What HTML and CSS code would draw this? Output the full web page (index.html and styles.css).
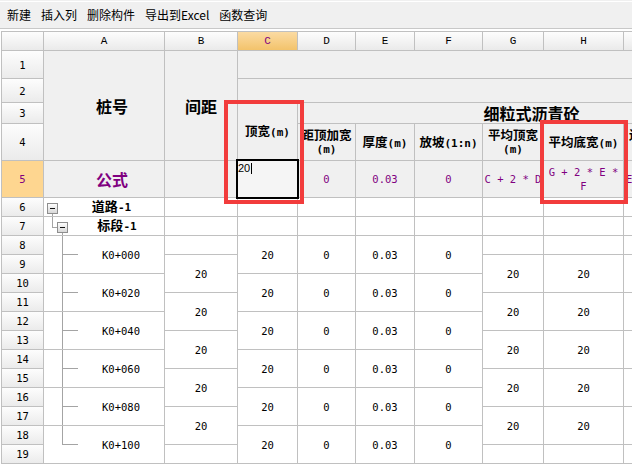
FILE: index.html
```html
<!DOCTYPE html>
<html lang="zh-CN">
<head>
<meta charset="utf-8">
<title>细粒式沥青砼</title>
<link rel="stylesheet" href="styles.css">
</head>
<body>
<div class="toolbar">
  <span>新建</span><span>插入列</span><span>删除构件</span><span>导出到Excel</span><span>函数查询</span>
</div>
<div class="sheet">
  <div class="grid">
    <!-- column header -->
    <div class="c ch"></div>
    <div class="c ch">A</div>
    <div class="c ch">B</div>
    <div class="c ch sel">C</div>
    <div class="c ch">D</div>
    <div class="c ch">E</div>
    <div class="c ch">F</div>
    <div class="c ch">G</div>
    <div class="c ch">H</div>
    <div class="c ch">I</div>
    <div class="c ch">J</div>

    <!-- row 1 -->
    <div class="c rh">1</div>
    <div class="c hd big pl rs4">桩号</div>
    <div class="c hd big rs4">间距</div>
    <div class="c hd cs8"></div>
    <!-- row 2 -->
    <div class="c rh">2</div>
    <div class="c hd cs8"></div>
    <!-- row 3 -->
    <div class="c rh">3</div>
    <div class="c hd th rs2"><span>顶宽<span class="u">(m)</span></span></div>
    <div class="c hd big cs7">细粒式沥青砼</div>
    <!-- row 4 -->
    <div class="c rh">4</div>
    <div class="c hd th"><span>距顶加宽<br><span class="u">(m)</span></span></div>
    <div class="c hd th"><span>厚度<span class="u">(m)</span></span></div>
    <div class="c hd th"><span>放坡<span class="u">(1:n)</span></span></div>
    <div class="c hd th"><span>平均顶宽<br><span class="u">(m)</span></span></div>
    <div class="c hd th"><span>平均底宽<span class="u">(m)</span></span></div>
    <div class="c hd th"><span>边坡宽度<br><span class="u">(m)</span></span></div>
    <div class="c hd"></div>
    <!-- row 5 -->
    <div class="c rh sel">5</div>
    <div class="c hd fxname pl">公式</div>
    <div class="c hd"></div>
    <div class="c editor"><span>20<i class="caret"></i></span></div>
    <div class="c hd fx">0</div>
    <div class="c hd fx">0.03</div>
    <div class="c hd fx">0</div>
    <div class="c hd fx">C + 2 * D</div>
    <div class="c hd fx">G + 2 * E * F</div>
    <div class="c hd fx left">E + F</div>
    <div class="c hd"></div>
    <!-- row 6 -->
    <div class="c rh">6</div>
    <div class="c tree">
      <svg class="tg" width="15" height="18" viewBox="0 0 15 18">
        <defs><linearGradient id="bx" x1="0" y1="0" x2="0" y2="1"><stop offset="0" stop-color="#ffffff"/><stop offset="1" stop-color="#d6d6d6"/></linearGradient></defs>
        <path d="M8.5 16V18" class="ln"/>
        <rect x="3.5" y="5.5" width="10" height="10" fill="url(#bx)" stroke="#8e8e8e"/>
        <rect x="6" y="10" width="5" height="1.4" fill="#111"/>
      </svg>
      <span class="tt">道路<span class="u">-1</span></span>
    </div>
    <div class="c"></div><div class="c"></div><div class="c"></div><div class="c"></div><div class="c"></div>
    <div class="c"></div><div class="c"></div><div class="c"></div><div class="c"></div>
    <!-- row 7 -->
    <div class="c rh">7</div>
    <div class="c tree">
      <svg class="tg" width="26" height="18" viewBox="0 0 26 18">
        <path d="M8.5 0V10.5H13M18.5 16V18" class="ln"/>
        <rect x="13.5" y="5.5" width="10" height="10" fill="url(#bx)" stroke="#8e8e8e"/>
        <rect x="16" y="10" width="5" height="1.4" fill="#111"/>
      </svg>
      <span class="tt">标段<span class="u">-1</span></span>
    </div>
    <div class="c"></div><div class="c"></div><div class="c"></div><div class="c"></div><div class="c"></div>
    <div class="c"></div><div class="c"></div><div class="c"></div><div class="c"></div>
    <!-- row 8 -->
    <div class="c rh">8</div>
    <div class="c tree rs2"><svg class="tg" width="34" height="37" viewBox="0 0 34 37"><path d="M18.5 0V37M18 18.5H34" class="ln"/></svg><span class="kt">K0+000</span></div>
    <div class="c"></div>
    <div class="c rs2">20</div>
    <div class="c rs2">0</div>
    <div class="c rs2">0.03</div>
    <div class="c rs2">0</div>
    <div class="c"></div><div class="c"></div><div class="c"></div><div class="c"></div>
    <!-- row 9 -->
    <div class="c rh">9</div>
    <div class="c rs2">20</div>
    <div class="c rs2">20</div>
    <div class="c rs2">20</div>
    <div class="c rs2"></div>
    <div class="c rs2"></div>
    <!-- row 10 -->
    <div class="c rh">10</div>
    <div class="c tree rs2"><svg class="tg" width="34" height="37" viewBox="0 0 34 37"><path d="M18.5 0V37M18 18.5H34" class="ln"/></svg><span class="kt">K0+020</span></div>
    <div class="c rs2">20</div>
    <div class="c rs2">0</div>
    <div class="c rs2">0.03</div>
    <div class="c rs2">0</div>
    <!-- row 11 -->
    <div class="c rh">11</div>
    <div class="c rs2">20</div>
    <div class="c rs2">20</div>
    <div class="c rs2">20</div>
    <div class="c rs2"></div>
    <div class="c rs2"></div>
    <!-- row 12 -->
    <div class="c rh">12</div>
    <div class="c tree rs2"><svg class="tg" width="34" height="37" viewBox="0 0 34 37"><path d="M18.5 0V37M18 18.5H34" class="ln"/></svg><span class="kt">K0+040</span></div>
    <div class="c rs2">20</div>
    <div class="c rs2">0</div>
    <div class="c rs2">0.03</div>
    <div class="c rs2">0</div>
    <!-- row 13 -->
    <div class="c rh">13</div>
    <div class="c rs2">20</div>
    <div class="c rs2">20</div>
    <div class="c rs2">20</div>
    <div class="c rs2"></div>
    <div class="c rs2"></div>
    <!-- row 14 -->
    <div class="c rh">14</div>
    <div class="c tree rs2"><svg class="tg" width="34" height="37" viewBox="0 0 34 37"><path d="M18.5 0V37M18 18.5H34" class="ln"/></svg><span class="kt">K0+060</span></div>
    <div class="c rs2">20</div>
    <div class="c rs2">0</div>
    <div class="c rs2">0.03</div>
    <div class="c rs2">0</div>
    <!-- row 15 -->
    <div class="c rh">15</div>
    <div class="c rs2">20</div>
    <div class="c rs2">20</div>
    <div class="c rs2">20</div>
    <div class="c rs2"></div>
    <div class="c rs2"></div>
    <!-- row 16 -->
    <div class="c rh">16</div>
    <div class="c tree rs2"><svg class="tg" width="34" height="37" viewBox="0 0 34 37"><path d="M18.5 0V37M18 18.5H34" class="ln"/></svg><span class="kt">K0+080</span></div>
    <div class="c rs2">20</div>
    <div class="c rs2">0</div>
    <div class="c rs2">0.03</div>
    <div class="c rs2">0</div>
    <!-- row 17 -->
    <div class="c rh">17</div>
    <div class="c rs2">20</div>
    <div class="c rs2">20</div>
    <div class="c rs2">20</div>
    <div class="c rs2"></div>
    <div class="c rs2"></div>
    <!-- row 18 -->
    <div class="c rh">18</div>
    <div class="c tree rs2"><svg class="tg" width="34" height="37" viewBox="0 0 34 37"><path d="M18.5 0V18.5M18 18.5H34" class="ln"/></svg><span class="kt">K0+100</span></div>
    <div class="c rs2">20</div>
    <div class="c rs2">0</div>
    <div class="c rs2">0.03</div>
    <div class="c rs2">0</div>
    <!-- row 19 -->
    <div class="c rh">19</div>
    <div class="c"></div>
    <div class="c"></div><div class="c"></div><div class="c"></div><div class="c"></div>
  </div>
</div>
<div class="mark m1"></div>
<div class="mark m2"></div>
</body>
</html>
```
FILE: styles.css
```css
html, body {
  margin: 0;
  padding: 0;
}
body {
  width: 632px;
  height: 468px;
  overflow: hidden;
  background: #ffffff;
  font-family: "Noto Sans CJK SC", "Noto Sans", sans-serif;
  color: #000;
}

.toolbar {
  height: 26px;
  padding: 2px 0 0 7px;
  border-bottom: 1px solid #c8c8c8;
  background: linear-gradient(#f0f0f0 0 1px, #ffffff 1px 2px, #f0f0f0 2px);
  display: flex;
  align-items: center;
  gap: 10px;
  font-size: 12px;
  line-height: 14px;
}

.sheet {
  height: 437px;
  padding: 2px 0 0 1px;
  overflow: hidden;
  background: #ffffff;
}

.grid {
  display: grid;
  width: max-content;
  background: #c0c0c0;
  gap: 1px;
  padding: 1px 0 1px 1px;
  grid-template-columns: 41px 120px 72px 59px 57px 58px 67px 60px 79px 60px 80px;
  grid-template-rows: 18px 27px 23px 20px 36px 36px 18px 18px repeat(12, 18px);
}

.c {
  background: #ffffff;
  display: flex;
  align-items: center;
  justify-content: center;
  text-align: center;
  overflow: hidden;
  min-width: 0;
  font-family: "DejaVu Sans Mono", monospace;
  font-size: 10.5px;
  line-height: 14px;
  color: #000;
}

.cs7 { grid-column: span 7; }
.cs8 { grid-column: span 8; }
.rs2 { grid-row: span 2; }
.rs4 { grid-row: span 4; }

.ch {
  background: linear-gradient(#fdfdfd, #eaeaea);
  font-family: "Liberation Mono", monospace;
  font-size: 11px;
}
.ch.sel {
  background: linear-gradient(#fbdba3, #f3c36b);
  color: #800080;
}

.rh {
  grid-column: 1;
  background: linear-gradient(#fdfdfd, #ebebeb);
}
.rh.sel {
  background: #fed690;
  color: #800080;
}

.hd { background: #f0f0f0; }

.big {
  font-family: "Noto Sans CJK SC", sans-serif;
  font-weight: bold;
  font-size: 16px;
  line-height: 20px;
}
.pl { padding-left: 16px; }

.th {
  font-family: "Noto Sans CJK SC", sans-serif;
  font-weight: bold;
  font-size: 12.5px;
  line-height: 13px;
}
.u {
  font-family: "DejaVu Sans Mono", monospace;
  font-weight: bold;
  font-size: 11px;
}

.fx { color: #800080; }
.fx.left {
  justify-content: flex-start;
  padding-left: 2px;
}
.fxname {
  font-family: "Noto Sans CJK SC", sans-serif;
  font-weight: bold;
  font-size: 16px;
  color: #800080;
}

.editor {
  margin: -2px -2px -2px -2px;
  border: 2px solid #000;
  background: #f5f5f5;
  align-items: flex-start;
  justify-content: flex-start;
  padding-top: 1px;
  font-family: "Liberation Sans", sans-serif;
  font-size: 11px;
  line-height: 12px;
  z-index: 2;
}
.caret {
  display: inline-block;
  width: 1px;
  height: 11px;
  margin-left: 1px;
  background: #000;
  vertical-align: -2px;
}

.tree {
  justify-content: flex-start;
  align-items: stretch;
}
.tg {
  display: block;
  flex: none;
  shape-rendering: crispEdges;
}
.ln {
  fill: none;
  stroke: #a4a4a4;
  stroke-width: 1;
}
.tt {
  flex: 1;
  align-self: center;
  text-align: center;
  font-family: "Noto Sans CJK SC", sans-serif;
  font-weight: bold;
  font-size: 13px;
  line-height: 16px;
}
.kt {
  flex: 1;
  align-self: center;
  text-align: center;
}

.mark {
  position: absolute;
  box-sizing: border-box;
  border: 4px solid #f23c3c;
  pointer-events: none;
}
.m1 { left: 224px; top: 100px; width: 80px; height: 104px; }
.m2 { left: 540px; top: 120px; width: 88px; height: 84px; }
```
